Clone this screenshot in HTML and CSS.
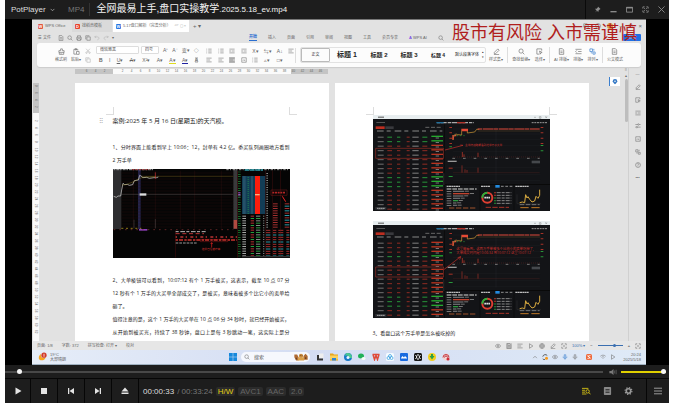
FILE: index.html
```html
<!DOCTYPE html>
<html lang="zh-CN">
<head>
<meta charset="utf-8">
<title>PotPlayer</title>
<link rel="stylesheet" href="styles.css">
</head>
<body>
<svg class="sprite" aria-hidden="true">
  <symbol id="doc" viewBox="0 0 16 16"><path d="M3 1.5h7l3 3v10H3zM5.500 7h5M5.500 10.500h5"/></symbol>
  <symbol id="search" viewBox="0 0 16 16"><circle cx="7" cy="7" r="4.800"/><path d="M10.500 10.500l4 4"/></symbol>
  <symbol id="print" viewBox="0 0 16 16"><path d="M4 6V2h8v4M4 12H2V6h12v6h-2M4 10h8v4.500H4z"/></symbol>
  <symbol id="undo" viewBox="0 0 16 16"><path d="M5 2L2 5l3 3M2 5h7c6 0 5 7 0 8"/></symbol>
  <symbol id="redo" viewBox="0 0 16 16"><path d="M11 2l3 3-3 3M14 5H7c-6 0-5 7 0 8"/></symbol>
  <symbol id="brush" viewBox="0 0 16 16"><path d="M6 6V2h4v4h4v4H2V6zM3 10v4.500h10V10M7 14v-2"/></symbol>
  <symbol id="paste" viewBox="0 0 16 16"><path d="M7 14H2V3h9v3M5 1.500h3v3H5zM8 8h6v6.500H8z"/></symbol>
  <symbol id="cut" viewBox="0 0 16 16"><path d="M3 2l8 9M13 2l-8 9"/><circle cx="4" cy="12.500" r="2"/><circle cx="12" cy="12.500" r="2"/></symbol>
  <symbol id="copy" viewBox="0 0 16 16"><path d="M5 5h9v9H5zM3 11H2V2h9v1"/></symbol>
  <symbol id="list" viewBox="0 0 16 16"><path d="M6 3h9M6 8h9M6 13h9M1 3h2M1 8h2M1 13h2"/></symbol>
  <symbol id="lines" viewBox="0 0 16 16"><path d="M1 3h14M1 8h10M1 13h14"/></symbol>
  <symbol id="indent" viewBox="0 0 16 16"><path d="M1 3h14M7 8h8M1 13h14M4 5.500L1.500 8 4 10.500"/></symbol>
  <symbol id="box" viewBox="0 0 16 16"><path d="M2 2h12v12H2zM5 10l3-3 3 4"/></symbol>
  <symbol id="nodes" viewBox="0 0 16 16"><path d="M2 2h6v6H2zM9 9h5v5H9zM11 2v4M4 11h3"/></symbol>
  <symbol id="pen" viewBox="0 0 16 16"><path d="M3 10l8-8 3 3-8 8H3zM2 15h12"/></symbol>
  <symbol id="cursor" viewBox="0 0 16 16"><path d="M8 14H2V2h11v4M8 7l6 3-3 1-1 3z"/></symbol>
  <symbol id="sliders" viewBox="0 0 16 16"><path d="M1 4h6M11 4h4M1 11h2M7 11h8"/><circle cx="9" cy="4" r="2"/><circle cx="5" cy="11" r="2"/></symbol>
  <symbol id="help" viewBox="0 0 16 16"><circle cx="8" cy="8" r="6.500"/><path d="M6 6c0-3 5-2 3.500 1L8 8.500V10M8 11.500v1"/></symbol>
  <symbol id="eye" viewBox="0 0 16 16"><path d="M1 8c3-6 11-6 14 0-3 6-11 6-14 0z"/><circle cx="8" cy="8" r="2"/></symbol>
  <symbol id="play" viewBox="0 0 16 16"><path d="M4 2l9 6-9 6z"/></symbol>
  <symbol id="globe" viewBox="0 0 16 16"><circle cx="8" cy="8" r="6.500"/><path d="M2 8h12M8 2c-4 4-4 8 0 12M8 2c4 4 4 8 0 12"/></symbol>
  <symbol id="expand" viewBox="0 0 16 16"><path d="M2 6V2h4M10 2h4v4M14 10v4h-4M6 14H2v-4M5 5l2 2M11 5L9 7M5 11l2-2M11 11L9 9"/></symbol>
  <symbol id="mic" viewBox="0 0 16 16"><path d="M6 2h4v7H6zM3 7c0 7 10 7 10 0M8 12v3"/></symbol>
  <symbol id="wifi" viewBox="0 0 16 16"><path d="M1 6c4-4 10-4 14 0M4 9c2-2 6-2 8 0M7 12h2"/></symbol>
</svg>

<main class="player">
  <header class="title-bar">
    <button class="brand">PotPlayer <svg class="caret" viewBox="0 0 8 8"><path d="M1 3l3 3 3-3"/></svg></button>
    <span class="format">MP4</span>
    <h1 class="file-name">全网最易上手,盘口实操教学<span class="file-tail">.2025.5.18_ev.mp4</span></h1>
    <div class="window-buttons">
      <button aria-label="置顶"><svg viewBox="0 0 16 16"><path class="solid" d="M9 1l6 6-2 1-3 3v3L7 11l-5 4 4-5-4-4h4l3-3z"/></svg></button>
      <button aria-label="最小化"><svg viewBox="0 0 16 16"><path class="thick" d="M1 13h14"/></svg></button>
      <button aria-label="最大化"><svg viewBox="0 0 16 16"><path d="M1 3h14v11H1z"/><path class="thick" d="M1 4h14"/></svg></button>
      <button aria-label="全屏"><svg viewBox="0 0 16 16"><use href="#expand"/></svg></button>
      <button aria-label="关闭"><svg viewBox="0 0 16 16"><path d="M1 1l14 14M15 1L1 15"/></svg></button>
    </div>
  </header>

  <section class="video">
    <div class="screen">
      <p class="warning">股市有风险 入市需谨慎</p>

      <div class="tabs">
        <span class="tab tab-home"><b class="logo logo-w">W</b>WPS Office</span>
        <span class="tab tab-shell"><b class="logo logo-d">D</b>找稻壳模板</span>
        <span class="tab tab-active"><b class="logo logo-b">W</b>5.17盘口解析（完善分析） <i>▱ ◻ ×</i></span>
        <span class="tab-add">+ ▾</span>
        <span class="tab-window"><svg class="ic"><use href="#copy"/></svg><svg class="ic"><use href="#help"/></svg><b class="avatar"></b><span>−</span><span>□</span><span>×</span></span>
      </div>

      <div class="menu-row">
        <div class="menu-left">
          <button class="file-menu">☰ 文件</button>
          <svg class="ic"><use href="#doc"/></svg><svg class="ic"><use href="#search"/></svg><svg class="ic"><use href="#print"/></svg><svg class="ic"><use href="#copy"/></svg><svg class="ic faint"><use href="#undo"/></svg><svg class="ic faint"><use href="#redo"/></svg><span>▾</span>
        </div>
        <nav class="menus">
          <a class="current" href="#">开始</a><a href="#">插入</a><a href="#">页面</a><a href="#">引用</a><a href="#">审阅</a><a href="#">视图</a><a href="#">工具</a><a href="#">会员专享</a><a href="#"><b class="ai">A</b> WPS AI</a><svg class="ic"><use href="#search"/></svg>
        </nav>
        <button class="share">分享</button>
      </div>

      <div class="ribbon">
        <div class="group clip">
          <button class="tool"><svg class="ic big"><use href="#brush"/></svg>格式刷</button>
          <button class="tool"><svg class="ic big"><use href="#paste"/></svg>粘贴▾</button>
          <div class="stack"><svg class="ic faint"><use href="#cut"/></svg><svg class="ic faint"><use href="#copy"/></svg></div>
        </div>
        <div class="group font">
          <div class="row">
            <select class="font-name" aria-label="字体"><option>微软雅黑</option></select>
            <select class="font-size" aria-label="字号"><option>四号</option></select>
            <span>A⁺</span><span>A⁻</span><span>变▾</span><span>◇</span>
          </div>
          <div class="row letters"><b>B</b><i>I</i><span><u>U</u>▾</span><span><s>A</s>▾</span><span>X²▾</span><span>A▾</span><span class="mark">A▾</span><span class="ink">A▾</span><span class="shade">A</span></div>
        </div>
        <div class="group para">
          <svg class="ic"><use href="#list"/></svg><svg class="ic"><use href="#list"/></svg><svg class="ic"><use href="#indent"/></svg><svg class="ic"><use href="#indent"/></svg><span>X▾</span><span>⇆▾</span><span>A↓</span><svg class="ic"><use href="#lines"/></svg>
          <svg class="ic"><use href="#lines"/></svg><svg class="ic"><use href="#lines"/></svg><svg class="ic on"><use href="#lines"/></svg><svg class="ic"><use href="#box"/></svg><svg class="ic"><use href="#list"/></svg><span>▵▾</span><span>□▾</span>
        </div>
        <div class="styles">
          <span class="style plain">正文</span><span class="style h1">标题 1</span><span class="style h2">标题 2</span><span class="style h3">标题 3</span><span class="style h4">标题 4</span><span class="style base">默认段落字体</span><span class="arrows">▴<br>▾</span>
        </div>
        <div class="group tools">
          <button class="tool"><svg class="ic big"><use href="#pen"/></svg>样式集▾</button>
          <button class="tool line"><svg class="ic big"><use href="#search"/></svg>查找替换▾</button>
          <button class="tool"><svg class="ic big"><use href="#cursor"/></svg>选择▾</button>
          <button class="tool line"><svg class="ic big"><use href="#doc"/></svg>AI 排版▾</button>
          <button class="tool"><svg class="ic big"><use href="#indent"/></svg>排版▾</button>
          <button class="tool"><svg class="ic big blue"><use href="#nodes"/></svg>排列▾</button>
          <button class="tool line"><svg class="ic big"><use href="#doc"/></svg>公文模式</button>
        </div>
      </div>

      <div class="workspace">
        <div class="v-ruler" id="v-ruler"></div>
        <div class="canvas">
          <div class="h-ruler" id="h-ruler"></div>
          <div class="pages">
            <article class="page">
              <h2><span class="handle">⠿</span>案例:2025 年 5 月 16 日(星期五)的天汽模。</h2>
              <p class="full">1、分时界面上能看到早上 10:06：12，封单有 4.2 亿。委买队列画圈地方看到</p>
              <p>2 万手单</p>
              <svg class="shot" id="shot-intraday" viewBox="0 0 531 267"></svg>
              <div class="after-shot">
                <p class="full">2、大单棱镜可以看到，10:07:12 有个 1 万手被买，这表示，截至 10 点 07 分</p>
                <p class="full">12 秒有个 1 万手的大买单全部成交了，是被买，意味着被多个比它小的卖单给</p>
                <p>砸了。</p>
                <p class="full">值得注意的是，这个 1 万手的大买单在 10 点 06 分 34 秒时，就已经开始被买，</p>
                <p class="full">从开始到被买光，持续了 38 秒钟，盘口上是每 3 秒跳动一笔，这实际上是分</p>
              </div>
            </article>
            <article class="page page-right">
              <svg class="shot" id="shot-prism-a" viewBox="0 0 531 288"></svg>
              <svg class="shot second" id="shot-prism-b" viewBox="0 0 531 291"></svg>
              <p>3、看盘口这个万手单是怎么被吃掉的</p>
            </article>
          </div>
        </div>
        <div class="scroller"><span>≡</span><span>▴</span><div class="thumb"></div></div>
        <aside class="side-tools">
          <span>—</span><svg class="ic"><use href="#pen"/></svg><svg class="ic"><use href="#cursor"/></svg><svg class="ic"><use href="#indent"/></svg><svg class="ic"><use href="#sliders"/></svg><svg class="ic"><use href="#box"/></svg><svg class="ic"><use href="#nodes"/></svg><svg class="ic"><use href="#help"/></svg><span>•••</span>
        </aside>
        <button class="pin" aria-label="定位"><svg viewBox="0 0 16 16"><path d="M8 1a6 6 0 0 1 6 6c0 4-6 8-6 8S2 11 2 7a6 6 0 0 1 6-6z"/><circle cx="8" cy="7" r="2"/></svg></button>
      </div>

      <div class="status">
        <span>页面: 1/8</span><span>字数: 372</span><span>拼写检查: 打开 ▾</span><span>校对</span>
        <div class="status-right">
          <svg class="ic"><use href="#eye"/></svg><svg class="ic on"><use href="#doc"/></svg><svg class="ic"><use href="#lines"/></svg><svg class="ic"><use href="#play"/></svg><svg class="ic"><use href="#globe"/></svg><svg class="ic"><use href="#pen"/></svg><svg class="ic"><use href="#expand"/></svg>
          <span class="zoom-value">100% ▾</span><b>−</b><input class="zoom" type="range" aria-label="缩放" value="68"><b>+</b><svg class="ic"><use href="#expand"/></svg>
        </div>
      </div>

      <div class="taskbar">
        <div class="weather"><svg viewBox="0 0 24 24"><path fill="#f5a524" d="M8 4c-2 8 4 13 12 10-3 9-16 9-18 1 0-5 2-9 6-11z"/><circle cx="16" cy="7" r="7" fill="#d13a2b"/><path fill="#fff" d="M15 3h2v8h-2z"/></svg><span>19°C<br>大部晴朗</span></div>
        <div class="dock">
          <svg viewBox="0 0 16 16"><path fill="#1688dc" d="M0 0h7.500v7.500H0zM8.500 0H16v7.500H8.500zM0 8.500h7.500V16H0zM8.500 8.500H16V16H8.500z"/></svg>
          <label class="task-search"><svg class="ic"><use href="#search"/></svg><input type="text" aria-label="搜索" placeholder="搜索"><svg class="critters" viewBox="0 0 40 22"><path fill="#b06b32" d="M1 4h8l4 8v9H6L1 12zM27 8l6-6 6 6v11H27z"/><circle cx="20" cy="8" r="6" fill="#c98a3c"/><path fill="#d9a04a" d="M11 12h18v9H11z"/><path fill="#5b3a24" d="M17 6h2v2h-2zM22 6h2v2h-2zM5 13h3v5H5zM32 12h3v5h-3z"/></svg></label>
          <svg viewBox="0 0 16 16"><path fill="#eee" d="M6 1h9v9H6z"/><path fill="#333" d="M2 4h4v7h8v4H2z"/></svg>
          <svg viewBox="0 0 16 16"><path fill="#e8a61d" d="M0 1h6l2 2h8v12H0z"/><path fill="#fbd25f" d="M0 5h16v8H0z"/><path fill="#2f86d6" d="M4 10h8v5H4z"/></svg>
          <svg viewBox="0 0 16 16"><circle cx="8" cy="8" r="8" fill="#1779c9"/><path fill="#4cc790" d="M4 1c7-3 13 3 12 9H8c2-4-2-6-7-4z"/><circle cx="8" cy="9" r="3" fill="#e8f5ff"/></svg>
          <svg viewBox="0 0 16 16"><ellipse cx="6" cy="6" rx="6" ry="5" fill="#20b15a"/><ellipse cx="11" cy="11" rx="4" ry="3" fill="#f3fff5"/></svg>
          <svg viewBox="0 0 16 16"><path fill="none" stroke="#df4b3b" stroke-width="3" d="M1 3h14M2 3l3 10 3-8 3 8 3-10"/></svg>
          <svg viewBox="0 0 16 16"><rect width="16" height="16" rx="3" fill="#f5fbff"/><g fill="none" stroke="#3aa0e0" stroke-width="1.500"><circle cx="8" cy="6" r="3"/><circle cx="5" cy="10" r="3"/><circle cx="11" cy="10" r="3"/></g></svg>
          <svg viewBox="0 0 16 16"><rect width="16" height="16" rx="2" fill="#1769e0"/><path fill="#fff" d="M2 10l3-4 3 3 2-3 4 4v1H2z"/></svg>
          <svg viewBox="0 0 16 16"><rect width="16" height="16" rx="3" fill="#161616"/><path fill="none" stroke="#fff" stroke-width="2" d="M3 4l3 4-3 4M13 4l-3 4 3 4M6 4h4M6 12h4"/></svg>
          <svg viewBox="0 0 16 16"><circle cx="8" cy="8" r="8" fill="#f2cf20"/><path fill="#2c9f48" d="M6 2h4v4h3l-5 7-5-7h3z"/></svg>
          <svg viewBox="0 0 16 16"><circle cx="8" cy="8" r="7" fill="#f1d5d5"/><path fill="none" stroke="#c43a44" stroke-width="2" d="M2 9a6 6 0 0 1 12 0M5 9a3 3 0 0 1 6 0"/><circle cx="12" cy="12" r="3" fill="#d22d38"/></svg>
        </div>
        <div class="tray">
          <svg class="ic" viewBox="0 0 16 16"><path d="M3 11l5-5 5 5"/></svg><svg viewBox="0 0 16 16"><path fill="none" stroke="#333" stroke-width="2" d="M14 4A7 7 0 0 0 2 7M2 13a7 7 0 0 0 6 2"/><circle cx="12" cy="11" r="4" fill="#f79a1c"/></svg><svg class="ic"><use href="#eye"/></svg><svg class="ic blue"><use href="#mic"/></svg><svg class="ic"><use href="#mic"/></svg><svg class="ime" viewBox="0 0 16 16"><rect width="16" height="16" rx="4" fill="#ee6a3c"/><path fill="none" stroke="#fff" stroke-width="2" d="M4 4l8 8M12 4c-8 0-8 4-4 4s3 5-4 4"/></svg><svg class="ic"><use href="#wifi"/></svg><svg class="ic"><use href="#play"/></svg>
          <time>20:24<br>2025/5/18</time>
        </div>
      </div>
    </div>
  </section>

  <div class="seek-row">
    <input class="seek" type="range" aria-label="播放进度" value="2">
    <svg class="speaker" viewBox="0 0 24 16"><path fill="#777" d="M1 5h5l6-5v16l-6-5H1z"/><path fill="none" stroke="#666" stroke-width="2" d="M15 4v8M19 2v12"/></svg>
    <input class="volume" type="range" aria-label="音量" value="100">
  </div>

  <footer class="controls">
    <button aria-label="播放"><svg viewBox="0 0 16 16"><path d="M3 1l12 7-12 7z"/></svg></button>
    <button aria-label="停止"><svg viewBox="0 0 16 16"><path d="M2 2h12v12H2z"/></svg></button>
    <button aria-label="上一个"><svg viewBox="0 0 16 16"><path d="M2 2h2.500v12H2zM14 2v12L5 8z"/></svg></button>
    <button aria-label="下一个"><svg viewBox="0 0 16 16"><path d="M11.500 2H14v12h-2.500zM2 2l9 6-9 6z"/></svg></button>
    <button aria-label="打开"><svg viewBox="0 0 16 16"><path d="M8 1l7 8H1zM1 11h14v3H1z"/></svg></button>
    <div class="time-row"><span class="now">00:00:33</span><span class="total">/ 00:33:24</span><span class="chip hw">H/W</span><span class="chip">AVC1</span><span class="chip">AAC</span><span class="chip">2.0</span></div>
    <div class="right-buttons">
      <button aria-label="播放列表搜索"><svg viewBox="0 0 24 20"><g fill="none" stroke="#e3cf14" stroke-width="2.200"><path d="M0 3h17M0 8h8M0 13h8M0 18h12"/><circle cx="15" cy="11" r="4.500"/><path d="M18 14l5 5"/></g></svg></button>
      <button aria-label="书签"><svg viewBox="0 0 20 20"><rect x="1" width="18" height="20" rx="2" fill="#888"/><path stroke="#1d1d1d" stroke-width="2.500" d="M5 7h10M5 13h10"/></svg></button>
      <button aria-label="设置"><svg viewBox="0 0 20 20"><circle cx="10" cy="10" r="5.500" fill="none" stroke="#999" stroke-width="4"/><circle cx="10" cy="10" r="8.500" fill="none" stroke="#999" stroke-width="3" stroke-dasharray="3.300 3.370"/></svg></button>
    </div>
    <button class="burger" aria-label="菜单"><svg viewBox="0 0 20 20"><path fill="none" stroke="#bbb" stroke-width="2" d="M0 3h20M0 10h20M0 17h20"/></svg></button>
  </footer>
</main>
<script src="script.js"></script>
</body>
</html>
```
FILE: styles.css
```css
* { box-sizing: border-box; }
body { margin: 0; background: #fff; font-family: "Liberation Sans", "Noto Sans CJK SC", sans-serif; }
button { border: 0; padding: 0; margin: 0; background: none; font: inherit; color: inherit; }
p, h1, h2 { margin: 0; font-weight: normal; }
i { font-style: normal; }
a { color: inherit; text-decoration: none; }
.sprite { display: none; }
.ic { display: block; width: 6px; height: 6px; flex: none; fill: none; stroke: currentColor; stroke-width: 1.6px; color: #777; }
.ic.big { width: 7px; height: 7px; }
.ic.faint { color: #b5b5b5; }
.ic.blue { color: #3b7fce; }
.on { background: #c9c9c9; }

.player { display: flex; flex-direction: column; height: calc(100vh - 2px); margin: 0 8px 0 5px; background: #1d1d1d; }

.title-bar { display: flex; align-items: center; height: 19px; flex: none; font-size: 8px; color: #ddd; }
.brand { display: flex; align-items: center; gap: 4px; width: 54px; margin-left: 6px; }
.caret { width: 5px; height: 5px; fill: none; stroke: #ccc; }
.format { padding: 0 5px 0 3px; color: #777; }
.file-name { padding-left: 6px; font-size: 10px; line-height: 12px; color: #f2f2f2; border-left: 1px solid #333; white-space: nowrap; }
.file-tail { font-size: 8px; }
.window-buttons { display: flex; align-items: center; align-self: stretch; gap: 9px; margin-left: auto; padding: 0 4px 0 8px; border-left: 1px solid #0a0a0a; }
.window-buttons svg { display: block; width: 7px; height: 7px; fill: none; stroke: #8e8e8e; stroke-width: 2; }
.window-buttons .solid { fill: #8e8e8e; stroke: none; }
.window-buttons .thick { stroke-width: 3; }

.video { flex: 1; min-height: 0; display: flex; padding: 0 23px 0 27px; background: #000; }
.screen { position: relative; flex: 1; min-width: 0; display: flex; flex-direction: column; background: #e2e2e2; border-top: 1px solid #777; color: #666; font-size: 4px; line-height: 6px; white-space: nowrap; }
.warning { position: absolute; z-index: 2; top: 2px; right: 9px; font-size: 18px; line-height: 22px; color: #b01e1e; }

.tabs { display: flex; height: 12px; flex: none; align-items: stretch; padding-left: 4px; font-size: 5px; }
.tab { display: flex; align-items: center; gap: 2px; padding: 0 3px; }
.tab-home { width: 36px; padding-left: 2px; font-size: 4px; }
.tab-shell { width: 40px; background: #dadada; font-size: 4px; }
.tab-active { width: 76px; margin-left: 1px; background: #fff; font-size: 4px; }
.tab i { color: #aaa; margin-left: auto; }
.logo { width: 5px; height: 5px; border-radius: 1px; color: #fff; font-size: 4px; line-height: 5px; text-align: center; }
.logo-w { background: #e0533d; }
.logo-d { background: #e8402a; }
.logo-b { background: #2a74e0; }
.tab-add { align-self: center; margin-left: 4px; font-size: 6px; }
.tab-window { display: flex; align-items: center; gap: 6px; margin-left: auto; padding-right: 4px; font-size: 6px; }
.avatar { width: 6px; height: 6px; border-radius: 50%; background: #d99b42; }

.menu-row { display: flex; align-items: center; flex: none; height: 11px; padding: 0 5px 0 6px; }
.menu-left { display: flex; align-items: center; gap: 3px; width: 211px; }
.file-menu { margin-right: 4px; }
.menus { display: flex; align-items: center; gap: 11px; flex: 1; }
.menus .current { color: #2b6fd0; font-weight: bold; border-bottom: 1px solid #2b6fd0; }
.ai { color: #7a4be8; }
.share { width: 18px; height: 7px; border-radius: 1px; background: #1e6fe6; color: #fff; line-height: 6px; }

.ribbon { display: flex; align-items: center; flex: none; height: 24px; margin: 0 5px; padding-left: 18px; background: #fcfcfc; border-radius: 3px; box-shadow: 0 1px 1px #ccc; }
.group { display: flex; align-items: center; }
.clip { gap: 4px; width: 39px; }
.tool { display: flex; flex-direction: column; align-items: center; gap: 2px; }
.tool .ic { margin-top: 1px; }
.stack { display: flex; flex-direction: column; gap: 3px; }
.font { flex-direction: column; align-items: stretch; gap: 1px; width: 112px; padding-left: 2px; }
.row { display: flex; align-items: center; gap: 4px; height: 9px; }
.row select { appearance: none; height: 8px; padding: 0 3px; border: 1px solid #ddd; border-radius: 1px; background: #fff; color: #555; font: inherit; }
.font-name { width: 43px; }
.font-size { width: 18px; margin-left: -2px; }
.row span { font-size: 5px; }
.letters { justify-content: space-between; padding: 0 8px 0 3px; font-size: 5px; }
.mark { border-bottom: 1px solid #e0dc20; }
.ink { border-bottom: 1px solid #2020a0; }
.shade { background: #ccc; }
.para { display: grid; grid-template-columns: repeat(8, 1fr); gap: 3px 5px; width: 90px; border-right: 1px solid #ddd; font-size: 5px; }
.styles { display: flex; align-items: center; flex: none; width: 186px; height: 16px; margin-left: 4px; border: 1px solid #e2e2e2; border-radius: 2px; color: #222; }
.style { flex: none; }
.plain { width: 29px; height: 14px; line-height: 12px; text-align: center; border: 1px solid #bbb; border-radius: 1px; }
.h1, .h2, .h3, .h4 { font-weight: bold; font-size: 6px; width: 31px; text-align: center; }
.h1 { width: 34px; font-size: 7px; }
.h2, .h3 { width: 30px; }
.h4 { width: 28px; font-size: 5px; }
.base { width: 27px; text-align: right; }
.arrows { margin-left: auto; padding-right: 1px; font-size: 3px; line-height: 5px; }
.tools { flex: 1; justify-content: space-between; padding: 0 18px 0 3px; }
.tool.line { padding-left: 4px; border-left: 1px solid #ddd; }

.workspace { position: relative; flex: 1; min-height: 0; display: flex; overflow: hidden; }
.v-ruler { display: flex; flex-direction: column; align-items: center; flex: none; width: 6px; margin: 16px 0 0 1px; padding-top: 2px; background: linear-gradient(#c4c4c4 30px, #fafafa 30px); font-size: 3px; overflow: hidden; }
.v-ruler span { flex: none; height: 6px; line-height: 6px; writing-mode: vertical-rl; margin-bottom: 1px; }
.canvas { flex: 1; min-width: 0; display: flex; flex-direction: column; }
.h-ruler { display: flex; align-self: flex-start; flex: none; height: 5px; margin: 2px 0 9px 36px; padding-left: 7px; width: 253px; background: linear-gradient(90deg, #c4c4c4 38px, #fafafa 38px 216px, #c4c4c4 216px); font-size: 3px; line-height: 5px; }
.h-ruler span { width: 9px; text-align: center; flex: none; }
.pages { display: flex; justify-content: center; gap: 6px; flex: 1; min-height: 0; overflow: hidden; }
.page { position: relative; flex: 0 1 254px; min-width: 0; padding: 32px 39px 0 38px; background: #fff; color: #222; font-family: "Open Sans", "Noto Sans CJK SC", sans-serif; font-size: 5px; line-height: 13px; }
.page::before, .page::after { content: ""; position: absolute; top: 24px; width: 7px; height: 7px; border-bottom: 1px solid #ddd; }
.page::before { left: 31px; border-right: 1px solid #ddd; }
.page::after { right: 32px; border-left: 1px solid #ddd; }
.page h2 { position: relative; font-size: 6px; margin-bottom: 13px; }
.handle { position: absolute; left: -14px; color: #999; }
.full { text-align-last: justify; }
.shot { display: block; width: 100%; margin-top: 2px; background: #050505; }
.after-shot { margin-top: 16px; }
.page-right .shot { margin-top: 0; }
.page-right .second { margin: 10px 0 9px; }
.scroller { display: flex; flex-direction: column; align-items: center; width: 5px; border-right: 1px solid #d0d0d0; }
.thumb { width: 3px; height: 43px; border-radius: 2px; background: #bdbdbd; }
.side-tools { display: flex; flex-direction: column; align-items: center; gap: 7px; width: 17px; padding-top: 4px; }
.pin { position: absolute; right: 26px; top: 10px; width: 11px; height: 9px; background: #fff; border-left: 1px solid #3b7fce; }
.pin svg { display: block; width: 6px; height: 7px; margin: auto; fill: #3478c4; }
.pin circle { fill: #fff; }

.status { display: flex; align-items: center; flex: none; gap: 9px; height: 9px; padding: 0 5px; background: #e6e6e6; }
.status-right { display: flex; align-items: center; gap: 5px; margin-left: auto; }
.zoom-value { color: #3b6fb0; }
input[type="range"] { appearance: none; margin: 0; background: none; }
.zoom { width: 25px; height: 4px; }
.zoom::-webkit-slider-runnable-track { height: 1px; background: #3b6fb0; }
.zoom::-webkit-slider-thumb { appearance: none; width: 3px; height: 3px; margin-top: -1px; border-radius: 50%; background: #3b6fb0; }

.taskbar { display: grid; grid-template-columns: 191px 1fr auto; align-items: center; flex: none; height: 15px; padding: 0 5px 0 6px; background: linear-gradient(90deg, #e6edf8, #d4ddf3 45%, #dfeaf7); border-bottom: 1px solid #9fb0c0; }
.dock > svg { width: 8px; height: 8px; flex: none; }
.weather { display: flex; align-items: center; gap: 3px; line-height: 5px; }
.weather svg { width: 9px; height: 10px; }
.dock { display: flex; align-items: center; gap: 6px; }
.dock > svg:first-child { margin-right: -2px; }
.task-search { display: flex; align-items: center; gap: 4px; width: 69px; height: 10px; padding: 0 2px 0 3px; border-radius: 5px; background: #f6f8fd; }
.task-search input { flex: 1; min-width: 0; padding: 0; border: 0; background: none; font: inherit; font-size: 5px; }
.task-search input::placeholder { color: #555; }
.critters { width: 14px; height: 8px; flex: none; }
.tray { display: flex; align-items: center; gap: 4px; line-height: 5px; }
.tray > svg { width: 6px; height: 6px; }
.tray .ime { margin: 0 4px; }
.tray time { text-align: right; margin-left: 3px; }

.seek-row { display: flex; align-items: center; flex: none; height: 13px; padding: 0 3px 0 0; }
.seek { flex: 1; min-width: 0; height: 8px; }
.seek::-webkit-slider-runnable-track { height: 2px; background: #484848; }
.seek::-webkit-slider-thumb, .volume::-webkit-slider-thumb { appearance: none; width: 5px; height: 5px; margin-top: -2px; border-radius: 50%; background: #f5f5f5; }
.speaker { width: 9px; height: 6px; margin: 0 3px 0 6px; }
.volume { width: 45px; height: 8px; }
.volume::-webkit-slider-runnable-track { height: 2px; background: #e0d000; }

.controls { display: flex; align-items: stretch; flex: none; height: 25px; border-top: 1px solid #060606; font-size: 8px; color: #ddd; }
.controls > button { width: 27px; border-right: 1px solid #060606; }
.controls > button:first-child { width: 26px; }
.controls button svg { display: block; width: 8px; height: 8px; margin: auto; fill: #e4e4e4; }
.time-row { display: flex; align-items: center; gap: 3px; padding-left: 4px; }
.total { color: #777; }
.chip { padding: 0 2px; line-height: 9px; border-radius: 2px; background: #2b2b2b; color: #666; }
.hw { color: #e3cf14; }
.right-buttons { display: flex; gap: 12px; margin-left: auto; padding-right: 13px; align-items: center; }
.right-buttons svg { min-width: 9px; height: 9px; }
.controls .burger { width: 23px; border-left: 1px solid #060606; border-right: 0; }
```
FILE: script.js
```js
const rect = (x, y, w, h, fill, o = 1) => `<rect x="${x}" y="${y}" width="${w}" height="${h}" fill="${fill}" opacity="${o}"/>`;
const line = (d, stroke, w = 1, dash = "") => `<path d="${d}" fill="none" stroke="${stroke}" stroke-width="${w}" stroke-dasharray="${dash}"/>`;
const note = (x, y, size, text) => `<text x="${x}" y="${y}" font-size="${size}" fill="#c8302c">${text}</text>`;

// Rulers
const fillRuler = (id, values) => {
  document.getElementById(id).innerHTML = values.map(v => `<span>${v}</span>`).join("");
};
const evens = n => Array.from({ length: n }, (_, i) => (i + 1) * 2);
fillRuler("h-ruler", [6, 4, 2, "", ...evens(23)]);
fillRuler("v-ruler", [8, 6, 4, 2, "", ...evens(31)]);

// Intraday chart with order queue
function intraday() {
  let s = rect(0, 0, 25, 180, "#2e2e30") + rect(75, 0, 8, 180, "#24244c") + rect(361, 0, 12, 180, "#39393b");
  for (let y = 12; y < 180; y += 9) s += line(`M25 ${y}H361`, "#2c0c0c");
  for (const x of [61, 127, 202, 245, 325]) s += line(`M${x} 5V180`, "#3a1414");
  s += line("M25 76H361", "#777") + line("M85 22H361", "#8a7a20");
  s += line("M2 2H120", "#aaa", 3, "5 3 9 2") + line("M58 2H110", "#a33", 3, "6 4") + line("M340 2H530", "#999", 3, "7 4 3 5") + line("M395 3H450", "#2a9aa8", 4, "14 2");
  s += line("M2 82l8 3 5-4h8l3-18 4-20 5 4 8-1 6 3 10-2 5-12 12-2 4-14 6 3 3 4 12-1 8 3 14-2 8 0 5-2", "#ddd", 2);
  s += line("M27 48l15-2 20-8 15-8 12-5 40-2", "#b0a030") + line("M127 10v20", "#c33", 2);
  s += rect(80, 73, 20, 7, "#ddd") + rect(78, 180, 25, 5, "#8a3fb8");
  s += line("M25 178h60", "#d0b020", 2, "6 8") + line("M63 152v26M127 150v28", "#777", 1) + line("M2 182H361", "#833", 2, "5 12");
  s += rect(362, 153, 10, 26, "#b04a40") + rect(373, 6, 1, 260, "#7b1515");
  s += line("M379 8V265", "#1c8b35", 8, "2 5") + line("M379 70v12", "#a040c0", 7, "3 2");
  s += rect(387, 21, 70, 114, "#123d56") + rect(426, 21, 15, 114, "#fa1d0c");
  for (let y = 24; y < 134; y += 6) s += line(`M390 ${y}h32`, "#4b7d91", 2, "8 16 6 9") + rect(404, y, 3, 2, "#26a84a");
  s += rect(426, 75, 14, 4, "#ffb080");
  for (let y = 140; y < 264; y += 7) {
    s += rect(388, y, 11, 3, "#a5a5a5") + rect(413, y, 10, 3, y % 3 ? "#b32f2f" : "#2a9a3e") + rect(429, y, 13, 3, y % 2 ? "#299b3e" : "#888") + rect(450, y, 4, 3, "#777");
  }
  for (let y = 12; y < 180; y += 7) s += rect(460, y, 5, 3, "#888") + (y > 100 ? rect(480, y, 14, 3, "#a12f2f") + rect(515, y, 14, 3, y % 2 ? "#a12f2f" : "#2a9aa8") : "");
  for (let y = 184; y < 264; y += 7) s += line(`M459 ${y}h70`, y % 3 ? "#a12f2f" : "#2a9aa8", 3, "13 8 10 6 15 9");
  for (const x of [456, 477, 503]) s += rect(x, 5, 1, 260, "#5b1414");
  s += `<path d="M474 63h48v16h-48z" fill="none" stroke="#b02525"/>` + line("M478 71h40", "#b02525", 5, "6 2") + line("M508 82l10 16", "#e22", 3);
  s += rect(187, 184, 1, 82, "#611") + line("M188 188h90", "#bbb", 3, "9 5 14 4") + line("M188 194h85", "#b33", 3, "12 8") + line("M188 204h184", "#b33", 4, "4 10 9 7");
  s += line("M188 213h184", "#c8322c", 5, "7 3 12 4") + line("M188 222h65", "#999", 3, "8 3") + `<path d="M262 211h82v7h-82z" fill="none" stroke="#c22"/>` + line("M296 235v-14l-3 4M296 221l3 4", "#e22", 2);
  s += note(266, 243, 8, "挂单已经被吃掉") + rect(387, 261, 144, 4, "#333");
  return s;
}

// Order prism dashboard
function prism(h, box, alt, notes) {
  let s = rect(0, 0, 531, h, "#131417") + rect(0, 0, 531, 12, "#e8eef0") + rect(15, 5, 18, 3, "#555");
  s += line("M483 7h6M499 5h5v5h-5zM517 4l5 5M522 4l-5 5", "#555") + rect(10, 21, 26, 3, "#555");
  s += line("M192 23h110", "#aaa", 4, "10 2 17 3") + rect(190, 21, 22, 4, "#22709c") + rect(252, 21, 25, 4, "#b0332b") + line("M476 23h46", "#999", 3, "6 2");
  s += rect(8, 34, 27, 8, "#bd2e20") + rect(37, 34, 25, 8, "#393a3e") + line("M157 37h48", "#666", 3, "12 5") + line("M12 48h196", "#888", 3, "20 9 12 12");
  for (let i = 0; i < 17; i++) {
    const y = 60 + i * 13.5;
    const green = alt.includes(i);
    const c = green ? "#28963a" : "#8f2c23";
    s += rect(14, y + 5, 18, 3, "#707070") + rect(43, y + 5, 14, 3, c) + rect(72, y + 5, 10, 3, c) + rect(101, y + 5, 9, 3, "#8f2c23");
    s += rect(118, y + 5, 19, 3, "#808080") + rect(148, y + 5, 15, 3, c) + rect(175, y + 2, 35, 4, green ? "#26a92f" : "#b93420") + rect(188, y + 8, 10, 2, "#aaa");
  }
  s += `<path d="M8 ${box}h204v30H8z" fill="none" stroke="#962d24" stroke-width="2"/>`;
  s += rect(212, 175, 3, 35, "#444") + rect(214, 28, 2, h - 28, "#090909") + rect(216, 207, 315, 3, "#090909") + rect(320, 210, 2, h - 210, "#090909") + rect(422, 210, 2, h - 210, "#090909");
  for (const y of [42, 57, 73, 91, 110, 130, 158, 178, 196]) s += line(`M240 ${y}H502`, "#23262a");
  s += line("M369 35v165", "#292c30");
  s += line("M233 36v55M507 36v55", "#a83328", 8, "3 13") + line("M233 94v14M507 90v24", "#28963a", 8, "3 13");
  s += line("M240 75l3-14 6-4 5 2 12 1v-14h17v8l22-3 6-8h8", "#d59d38", 2) + line("M240 74v-12h10M265 43h18v4h-17", "#e64a35", 4) + line("M241 62h35", "#27a53c", 2, "4 6") + line("M314 42h186", "#df4938", 3, "14 2 30 1") + line("M314 48H502", "#8c6a30");
  s += line("M268 126v-15M273 126v-8M315 126v-13", "#d23b2c", 2) + line("M240 126H500", "#6a2522", 2, "2 4") + line("M238 130H500", "#777", 3, "8 24");
  s += rect(224, 137, 27, 4, "#999") + rect(476, 137, 25, 8, "#45484c") + line("M240 173H500", "#5a2522", 1) + line("M267 173v-22M276 173v-10M282 173v-8M315 173v-15", "#a83228", 2) + rect(227, 158, 12, 3, "#a83328") + rect(227, 183, 12, 3, "#28963a");
  s += line("M221 214h40", "#bbb", 4, "6 1") + line("M221 222h90", "#999", 4, "14 3");
  [48, 70, 45, 30, 22, 15, 17].forEach((w, i) => {
    s += rect(221, 228 + i * 7, 14, 3, "#777") + rect(240, 227 + i * 7, w * 0.7, 4, i === 1 ? "#c2432e" : i === 4 ? "#2e9a3f" : "#68696b") + rect(242 + w * 0.7, 227 + i * 7, 12, 3, "#777");
  });
  s += line("M228 279h80", "#a0522c", 3, "16 5") + line("M324 214h28", "#bbb", 4, "6 1") + rect(367, 210, 13, 8, "#238be0") + line("M384 214h34", "#888", 3, "8 5");
  s += `<circle cx="343" cy="248" r="15" fill="none" stroke="#de3f32" stroke-width="6"/>` + line("M343 233a15 15 0 0 0 -15 15", "#27b43b", 6) + line("M334 248h18", "#ddd", 5, "5 1");
  for (let i = 0; i < 5; i++) s += rect(364, 231 + i * 8, 4, 4, i < 2 ? "#c8382c" : "#25a23b") + line(`M371 ${233 + i * 8}h44`, "#888", 3, "12 3 9 3");
  s += line("M338 277h70", "#a83328", 3, "16 4") + line("M427 214h40", "#bbb", 4, "6 1");
  s += line("M440 263l8-2 7 2 3-24 4 10 3-4 5 8 7 8 8-3 4-14 6 6 5-9v-17", "#d8aa40", 3) + line("M432 238v28h72", "#444") + line("M440 269h60", "#777", 3, "14 4") + line("M442 278h60", "#c07a28", 3, "25 8");
  s += rect(7, h - 12, 33, 8, "#303236") + line("M12 " + (h - 8) + "h24", "#aaa", 3, "5 1");
  return s + notes;
}

document.getElementById("shot-intraday").innerHTML = intraday();
document.getElementById("shot-prism-a").innerHTML = prism(288, 100, [0, 1, 9, 10, 11],
  line("M216 105l54-14-8-1", "#c4302a", 2) + note(276, 94, 8, "主单持续跑能看到这单万手大单"));
document.getElementById("shot-prism-b").innerHTML = prism(291, 138, [3, 12, 13, 14],
  line("M211 147l52-40-9 3M263 107l-3 9", "#c4302a", 2) + note(250, 86, 10, "这里能看到，这两万手单被多个比他小的卖单吃掉了,") + note(250, 98, 10, "大单成交时间是10:06:34 到10:07:12 这里10:07:12"));
```
